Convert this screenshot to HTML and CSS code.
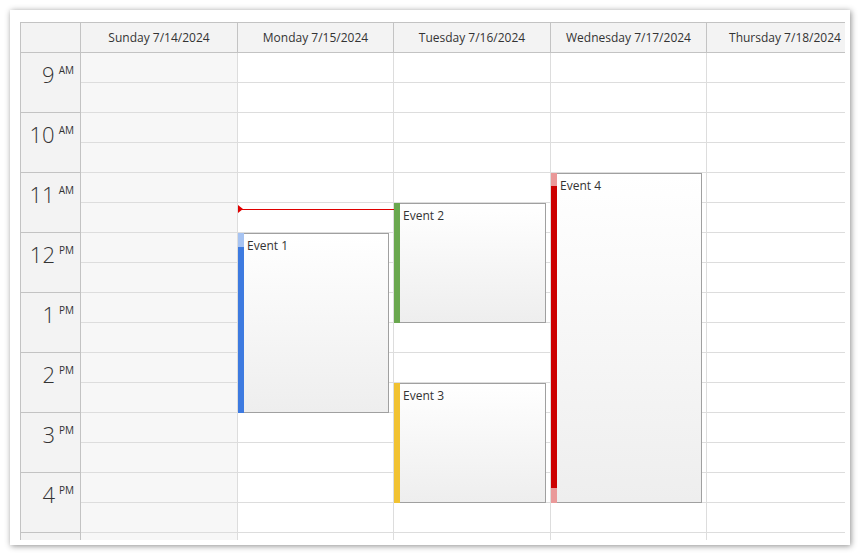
FILE: index.html
```html
<!DOCTYPE html>
<html lang="en">
<head>
    <meta charset="UTF-8">
    <title>Calendar - Week</title>
    <link rel="stylesheet" href="styles.css">
</head>
<body>
    <div class="card">
        <div class="calendar">
            <div class="cal-head">
                <div class="corner"></div>
                <div class="day-head">Sunday 7/14/2024</div>
                <div class="day-head">Monday 7/15/2024</div>
                <div class="day-head">Tuesday 7/16/2024</div>
                <div class="day-head">Wednesday 7/17/2024</div>
                <div class="day-head">Thursday 7/18/2024</div>
            </div>

            <div class="cal-body">
                <div class="hours">
                    <div class="hour"><span class="num">9</span><span class="ampm">AM</span></div>
                    <div class="hour"><span class="num">10</span><span class="ampm">AM</span></div>
                    <div class="hour"><span class="num">11</span><span class="ampm">AM</span></div>
                    <div class="hour"><span class="num">12</span><span class="ampm">PM</span></div>
                    <div class="hour"><span class="num">1</span><span class="ampm">PM</span></div>
                    <div class="hour"><span class="num">2</span><span class="ampm">PM</span></div>
                    <div class="hour"><span class="num">3</span><span class="ampm">PM</span></div>
                    <div class="hour"><span class="num">4</span><span class="ampm">PM</span></div>
                    <div class="hour"></div>
                </div>

                <div class="day weekend"></div>

                <div class="day">
                    <!-- current time marker -->
                    <div class="now-line"></div>
                    <div class="now-arrow"></div>

                    <div class="event" style="top: 180px; height: 180px;">
                        <div class="bar blue-light"><div class="bar-fill blue" style="top: 14px; bottom: 0;"></div></div>
                        <div class="event-text">Event 1</div>
                    </div>
                </div>

                <div class="day">
                    <div class="event" style="top: 150px; height: 120px;">
                        <div class="bar green"></div>
                        <div class="event-text">Event 2</div>
                    </div>
                    <div class="event" style="top: 330px; height: 120px;">
                        <div class="bar yellow"></div>
                        <div class="event-text">Event 3</div>
                    </div>
                </div>

                <div class="day">
                    <div class="event" style="top: 120px; height: 330px;">
                        <div class="bar red-light"><div class="bar-fill red" style="top: 13px; bottom: 15px;"></div></div>
                        <div class="event-text">Event 4</div>
                    </div>
                </div>

                <div class="day"></div>
            </div>
        </div>
    </div>
</body>
</html>
```

FILE: styles.css
```css
:root {
    --line: #dddddd;
    --line-dark: #c3c3c3;
    --head-bg: #f3f3f3;
    --text: #333333;
}

body {
    margin: 0;
    padding: 10px;
    background: #ffffff;
    font-family: 'Open Sans', sans-serif;
    color: var(--text);
}

.card {
    width: 840px;
    height: 535px;
    box-sizing: border-box;
    padding: 12px 5px 5px 10px;
    background: #ffffff;
    box-shadow: 1px 1px 6px rgba(0,0,0,0.45);
}

.calendar {
    width: 825px;
    height: 518px;
    box-sizing: border-box;
    overflow: hidden;
    border-top: 1px solid var(--line-dark);
    border-left: 1px solid var(--line-dark);
}

.cal-head,
.cal-body {
    display: grid;
    grid-template-columns: 60px 157px 156px 157px 156px 157px;
}

.cal-head {
    height: 30px;
    box-sizing: border-box;
    border-bottom: 1px solid var(--line-dark);
    background: var(--head-bg);
}

.corner,
.day-head {
    border-right: 1px solid var(--line-dark);
}

.day-head {
    display: flex;
    align-items: center;
    justify-content: center;
    font-size: 12px;
    white-space: nowrap;
}

.hours {
    background: var(--head-bg);
    border-right: 1px solid var(--line-dark);
}

.hour {
    height: 60px;
    box-sizing: border-box;
    border-bottom: 1px solid var(--line-dark);
    display: flex;
    justify-content: flex-end;
    padding: 6px 6px 0 0;
}

.hour .num {
    font-size: 22px;
    font-weight: 300;
    line-height: 30px;
}

.hour .ampm {
    font-size: 10px;
    line-height: 12px;
    margin: 5px 0 0 4px;
}

.day {
    position: relative;
    height: 540px;
    border-right: 1px solid var(--line);
    background-image: repeating-linear-gradient(to bottom, transparent 0 29px, var(--line) 29px 30px);
}

.day.weekend {
    background-color: #f7f7f7;
}

.event {
    position: absolute;
    left: 0;
    right: 4px;
    box-sizing: border-box;
    border: 1px solid #a0a0a0;
    border-left: none;
    padding-left: 6px;
    background: linear-gradient(to bottom, #ffffff, #eeeeee);
}

.bar {
    position: absolute;
    left: 0;
    top: -1px;
    bottom: -1px;
    width: 6px;
}

.bar-fill {
    position: absolute;
    left: 0;
    right: 0;
}

.blue { background: #3d7ae0; }
.blue-light { background: #a6c3f2; }
.green { background: #6aa84f; }
.yellow { background: #f1c232; }
.red { background: #cc0000; }
.red-light { background: #ea9999; }

.event-text {
    font-size: 12px;
    line-height: 16px;
    padding: 4px 0 0 3px;
}

.now-line {
    position: absolute;
    left: 0;
    right: -1px;
    top: 156px;
    height: 1px;
    background: #e00000;
    z-index: 2;
}

.now-arrow {
    position: absolute;
    left: 0;
    top: 152px;
    width: 0;
    height: 0;
    border-left: 5px solid #e00000;
    border-top: 4px solid transparent;
    border-bottom: 4px solid transparent;
    z-index: 2;
}
```
